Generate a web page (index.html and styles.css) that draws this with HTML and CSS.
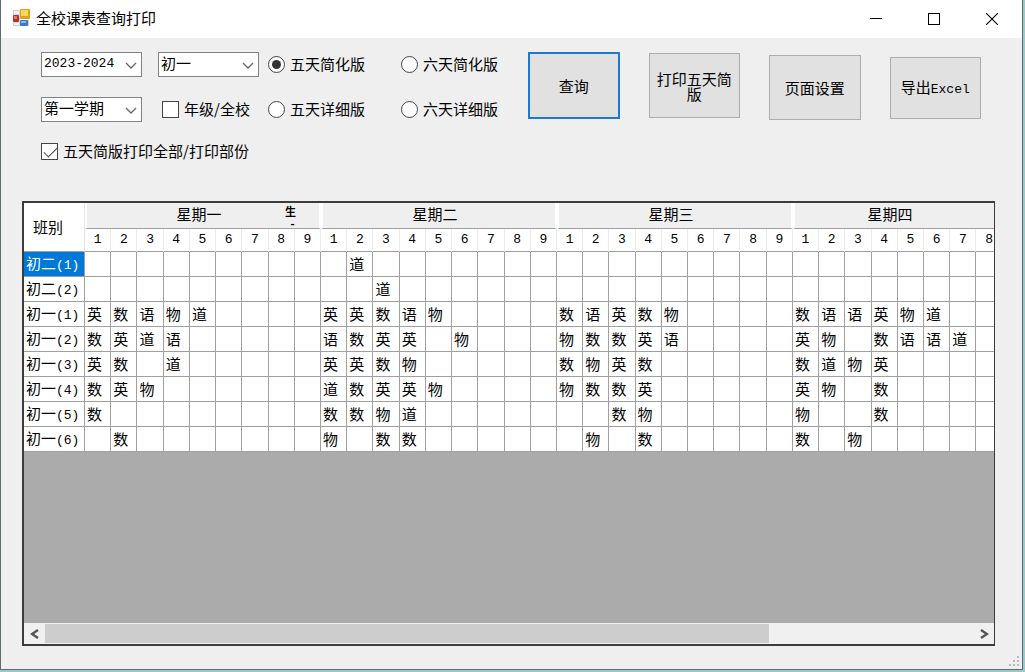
FILE: index.html
```html
<!DOCTYPE html>
<html lang="zh-CN">
<head>
<meta charset="utf-8">
<title>全校课表查询打印</title>
<link rel="stylesheet" href="styles.css">
</head>
<body>
<main class="window">
  <header class="titlebar">
    <svg class="app-icon" width="18" height="18" viewBox="0 0 18 18" aria-hidden="true">
      <rect x="1.500" y="1.500" width="15" height="15" fill="#f6f6f6" stroke="#cfcfcf"/>
      <path d="M1 5.500H8M7.500 1V17M7 11.500H17M1 13.500H8" stroke="#d8d8d8"/>
      <rect x="1" y="6" width="6" height="7" rx="1" fill="#b3302b"/>
      <rect x="2" y="7" width="3" height="3" fill="#e07a70"/>
      <rect x="8" y="0" width="10" height="10" rx="1" fill="#dba21a"/>
      <rect x="9" y="1" width="7" height="6" fill="#fbd75c"/>
      <rect x="8" y="11" width="8" height="6" rx="1" fill="#3c78cf"/>
      <rect x="9" y="12" width="5" height="2" fill="#8ab8f4"/>
    </svg>
    <h1 class="title">全校课表查询打印</h1>
    <div class="window-buttons">
      <button class="window-button" aria-label="最小化"><svg width="12" height="12"><path d="M0 5.500H12" stroke="#000"/></svg></button>
      <button class="window-button" aria-label="最大化"><svg width="12" height="12"><rect x=".5" y=".5" width="11" height="11" fill="none" stroke="#000"/></svg></button>
      <button class="window-button" aria-label="关闭"><svg width="12" height="12"><path d="M0 0L12 12M12 0L0 12" stroke="#000" stroke-width="1.100"/></svg></button>
    </div>
  </header>

  <form class="toolbar">
    <div class="filters">
      <div class="combo">
        <select class="combo-field mono" aria-label="学年"><option>2023-2024</option></select>
        <svg class="combo-arrow" width="12" height="7"><path d="M1 1L6 6L11 1" fill="none" stroke="#666" stroke-width="1.300"/></svg>
      </div>
      <div class="combo">
        <select class="combo-field" aria-label="年级"><option>初一</option></select>
        <svg class="combo-arrow" width="12" height="7"><path d="M1 1L6 6L11 1" fill="none" stroke="#666" stroke-width="1.300"/></svg>
      </div>
      <label class="option"><input class="radio" type="radio" name="mode" checked>五天简化版</label>
      <label class="option"><input class="radio" type="radio" name="mode">六天简化版</label>
      <div class="combo">
        <select class="combo-field" aria-label="学期"><option>第一学期</option></select>
        <svg class="combo-arrow" width="12" height="7"><path d="M1 1L6 6L11 1" fill="none" stroke="#666" stroke-width="1.300"/></svg>
      </div>
      <label class="option grade"><input class="check" type="checkbox">年级/全校</label>
      <label class="option"><input class="radio" type="radio" name="mode">五天详细版</label>
      <label class="option"><input class="radio" type="radio" name="mode">六天详细版</label>
      <label class="option wide"><input class="check" type="checkbox" checked>五天简版打印全部/打印部份</label>
    </div>
    <div class="actions">
      <button type="button" class="action primary">查询</button>
      <button type="button" class="action">打印五天简版</button>
      <button type="button" class="action settings">页面设置</button>
      <button type="button" class="action export">导出<span class="latin">Excel</span></button>
    </div>
  </form>

  <section class="grid-panel">
    <div class="grid-view">
      <table class="timetable">
        <colgroup id="columns"><col class="class-column"></colgroup>
        <thead id="head"></thead>
        <tbody id="body"></tbody>
      </table>
      <div class="overprint"><span>生</span><span class="dash">-</span></div>
    </div>
    <div class="scrollbar">
      <button class="scroll-button" aria-label="向左"><svg width="10" height="10"><path d="M8 1L2 5L8 9" fill="none" stroke="#555" stroke-width="2.400"/></svg></button>
      <div class="track"><div class="thumb"></div></div>
      <button class="scroll-button" aria-label="向右"><svg width="10" height="10"><path d="M2 1L8 5L2 9" fill="none" stroke="#555" stroke-width="2.400"/></svg></button>
    </div>
  </section>
  <footer class="statusbar">
    <svg width="10" height="10" fill="#b9b9b9"><path d="M8 0h2v2h-2zM8 4h2v2h-2zM4 4h2v2h-2zM8 8h2v2h-2zM4 8h2v2h-2zM0 8h2v2h-2z"/></svg>
  </footer>
</main>
<script src="timetable.js"></script>
</body>
</html>
```
FILE: styles.css
```css
* { box-sizing: border-box; }

body {
  margin: 0;
  background: #98cbc8;
  color: #000;
  font: 15px/20px "Noto Sans CJK SC", sans-serif;
}

button, select, input { font: inherit; color: inherit; margin: 0; }

.window {
  display: flex;
  flex-direction: column;
  height: calc(100vh - 2px);
  margin-right: 2px;
  border: 1px solid #5d6c6c;
  border-top: 0;
  background: #efefef;
}

.titlebar {
  display: flex;
  align-items: center;
  height: 38px;
  padding: 0 1px 2px 11px;
  background: #fff;
}
.app-icon { flex: none; }
.title { flex: 1; margin: 0 0 0 6px; font-size: 15px; font-weight: 400; }
.window-buttons { display: flex; }
.window-button {
  display: grid;
  place-items: center;
  width: 58px;
  height: 36px;
  padding: 2px 0 0;
  border: 0;
  background: none;
}

.toolbar {
  display: flex;
  align-items: flex-start;
  height: 163px;
  padding: 14px 41px 0 40px;
}
.filters {
  display: grid;
  flex: none;
  grid-template-columns: 117px 110px 133px 127px;
  grid-template-rows: 24px 24px 18px;
  row-gap: 21px;
  align-items: center;
}
.combo { position: relative; width: 101px; }
.combo-field {
  display: block;
  width: 100%;
  height: 25px;
  padding: 0 0 2px 2px;
  border: 1px solid #828282;
  border-radius: 0;
  background: #fff;
  line-height: 20px;
  appearance: none;
}
.mono {
  padding-bottom: 0;
  font-family: "Liberation Mono", monospace;
  font-size: 13px;
}
.combo-arrow { position: absolute; right: 5px; top: 10px; pointer-events: none; }
.option { display: flex; align-items: center; gap: 5px; white-space: nowrap; }
.grade { padding-left: 4px; }
.wide { grid-column: 1 / -1; }

.radio, .check {
  flex: none;
  width: 17px;
  height: 17px;
  border: 1px solid #444;
  background: #fff;
  appearance: none;
}
.radio { display: grid; place-items: center; border-radius: 50%; }
.radio:checked::before {
  content: "";
  width: 9px;
  height: 9px;
  border-radius: 50%;
  background: #333;
}
.check:checked::before {
  content: "";
  display: block;
  width: 12px;
  height: 6px;
  margin: 3px 0 0 2px;
  border: solid #444;
  border-width: 0 0 1px 1px;
  transform: rotate(-45deg);
}

.actions {
  display: grid;
  flex: 1;
  grid-template-columns: repeat(4, minmax(0, 1fr));
  column-gap: 29px;
  align-items: start;
}
.action {
  height: 65px;
  margin-top: 1px;
  padding: 0 6px;
  border: 1px solid #adadad;
  background: #e1e1e1;
  line-height: 15px;
}
.primary { height: 67px; margin-top: 0; border: 2px solid #1a7ad0; }
.settings { margin-top: 3px; }
.export { height: 62px; margin-top: 5px; padding: 0; }
.latin { font-family: "Liberation Mono", monospace; font-size: 13px; }

.grid-panel {
  display: flex;
  flex: 1;
  flex-direction: column;
  margin: 0 27px 0 21px;
  border: 2px solid #3c3c3c;
  border-right-width: 1px;
  background: #ababab;
  min-height: 0;
}
.grid-view { position: relative; flex: 1; overflow: hidden; }

.timetable {
  width: 1005px;
  table-layout: fixed;
  border-collapse: separate;
  border-spacing: 0;
  background: #fff;
}
.class-column { width: 61px; }
.timetable th, .timetable td {
  padding: 0 0 0 2px;
  border: solid #a0a0a0;
  border-width: 0 1px 1px 0;
  font-weight: 400;
  text-align: left;
  white-space: nowrap;
}
.timetable td, .timetable tbody th { height: 25px; line-height: 20px; }
.timetable .corner { padding-left: 9px; border-right-color: #e5e5e5; }
.timetable .day {
  height: 26px;
  padding: 0 8px 3px 0;
  border-right: 2px solid #fff;
  border-left: 2px solid #fff;
  background: #efefef;
  text-align: center;
}
.timetable .day:last-child { padding-right: 42px; }
.timetable .period {
  height: 23px;
  padding: 0;
  border-right-color: #ebebeb;
  font-family: "Liberation Mono", monospace;
  font-size: 13px;
  text-align: center;
}
.timetable .number { font-family: "Liberation Mono", monospace; font-size: 13px; }
.timetable .selected { background: #0078d7; color: #fff; }

.overprint {
  position: absolute;
  left: 261px;
  top: 0;
  display: grid;
  font-size: 11px;
  font-weight: 700;
  line-height: 16px;
  text-align: center;
}
.dash {
  padding-left: 4px;
  font-family: "Liberation Mono", monospace;
  line-height: 10px;
}

.scrollbar {
  display: flex;
  height: 21px;
  background: #f0f0f0;
}
.scroll-button {
  display: grid;
  place-items: center;
  width: 21px;
  height: 21px;
  padding: 0;
  border: 0;
  background: none;
}
.track { flex: 1; padding: 1px 0; }
.thumb { width: 78%; height: 19px; background: #cdcdcd; }

.statusbar {
  display: flex;
  justify-content: flex-end;
  align-items: flex-end;
  height: 23px;
  padding: 0 3px 3px 0;
}
```
FILE: timetable.js
```js
const days = ["星期一", "星期二", "星期三", "星期四"];
const rows = [
  ["初二", 1, "", " 道", "", ""],
  ["初二", 2, "", "  道", "", ""],
  ["初一", 1, "英数语物道", "英英数语物", "数语英数物", "数语语英物道"],
  ["初一", 2, "数英道语", "语数英英 物", "物数数英语", "英物 数语语道"],
  ["初一", 3, "英数 道", "英英数物", "数物英数", "数道物英"],
  ["初一", 4, "数英物", "道数英英物", "物数数英", "英物 数"],
  ["初一", 5, "数", "数数物道", "  数物", "物  数"],
  ["初一", 6, " 数", "物 数数", " 物 数", "数 物"]
];
const periods = [1, 2, 3, 4, 5, 6, 7, 8, 9];

document.getElementById("columns").innerHTML += "<col>".repeat(days.length * 9);
document.getElementById("head").innerHTML =
  `<tr><th class="corner" rowspan="2">班别</th>${days.map(d => `<th class="day" colspan="9">${d}</th>`).join("")}</tr>` +
  `<tr>${days.map((d, i) => periods.slice(0, i === 3 ? 8 : 9).map(p => `<th class="period">${p}</th>`).join("")).join("")}</tr>`;
document.getElementById("body").innerHTML = rows.map(([grade, number, ...lessons], i) =>
  `<tr><th${i === 0 ? ' class="selected"' : ""}>${grade}<span class="number">(${number})</span></th>` +
  lessons.map(day => periods.map(p => `<td>${(day[p - 1] || "").trim()}</td>`).join("")).join("") + "</tr>"
).join("");
```
